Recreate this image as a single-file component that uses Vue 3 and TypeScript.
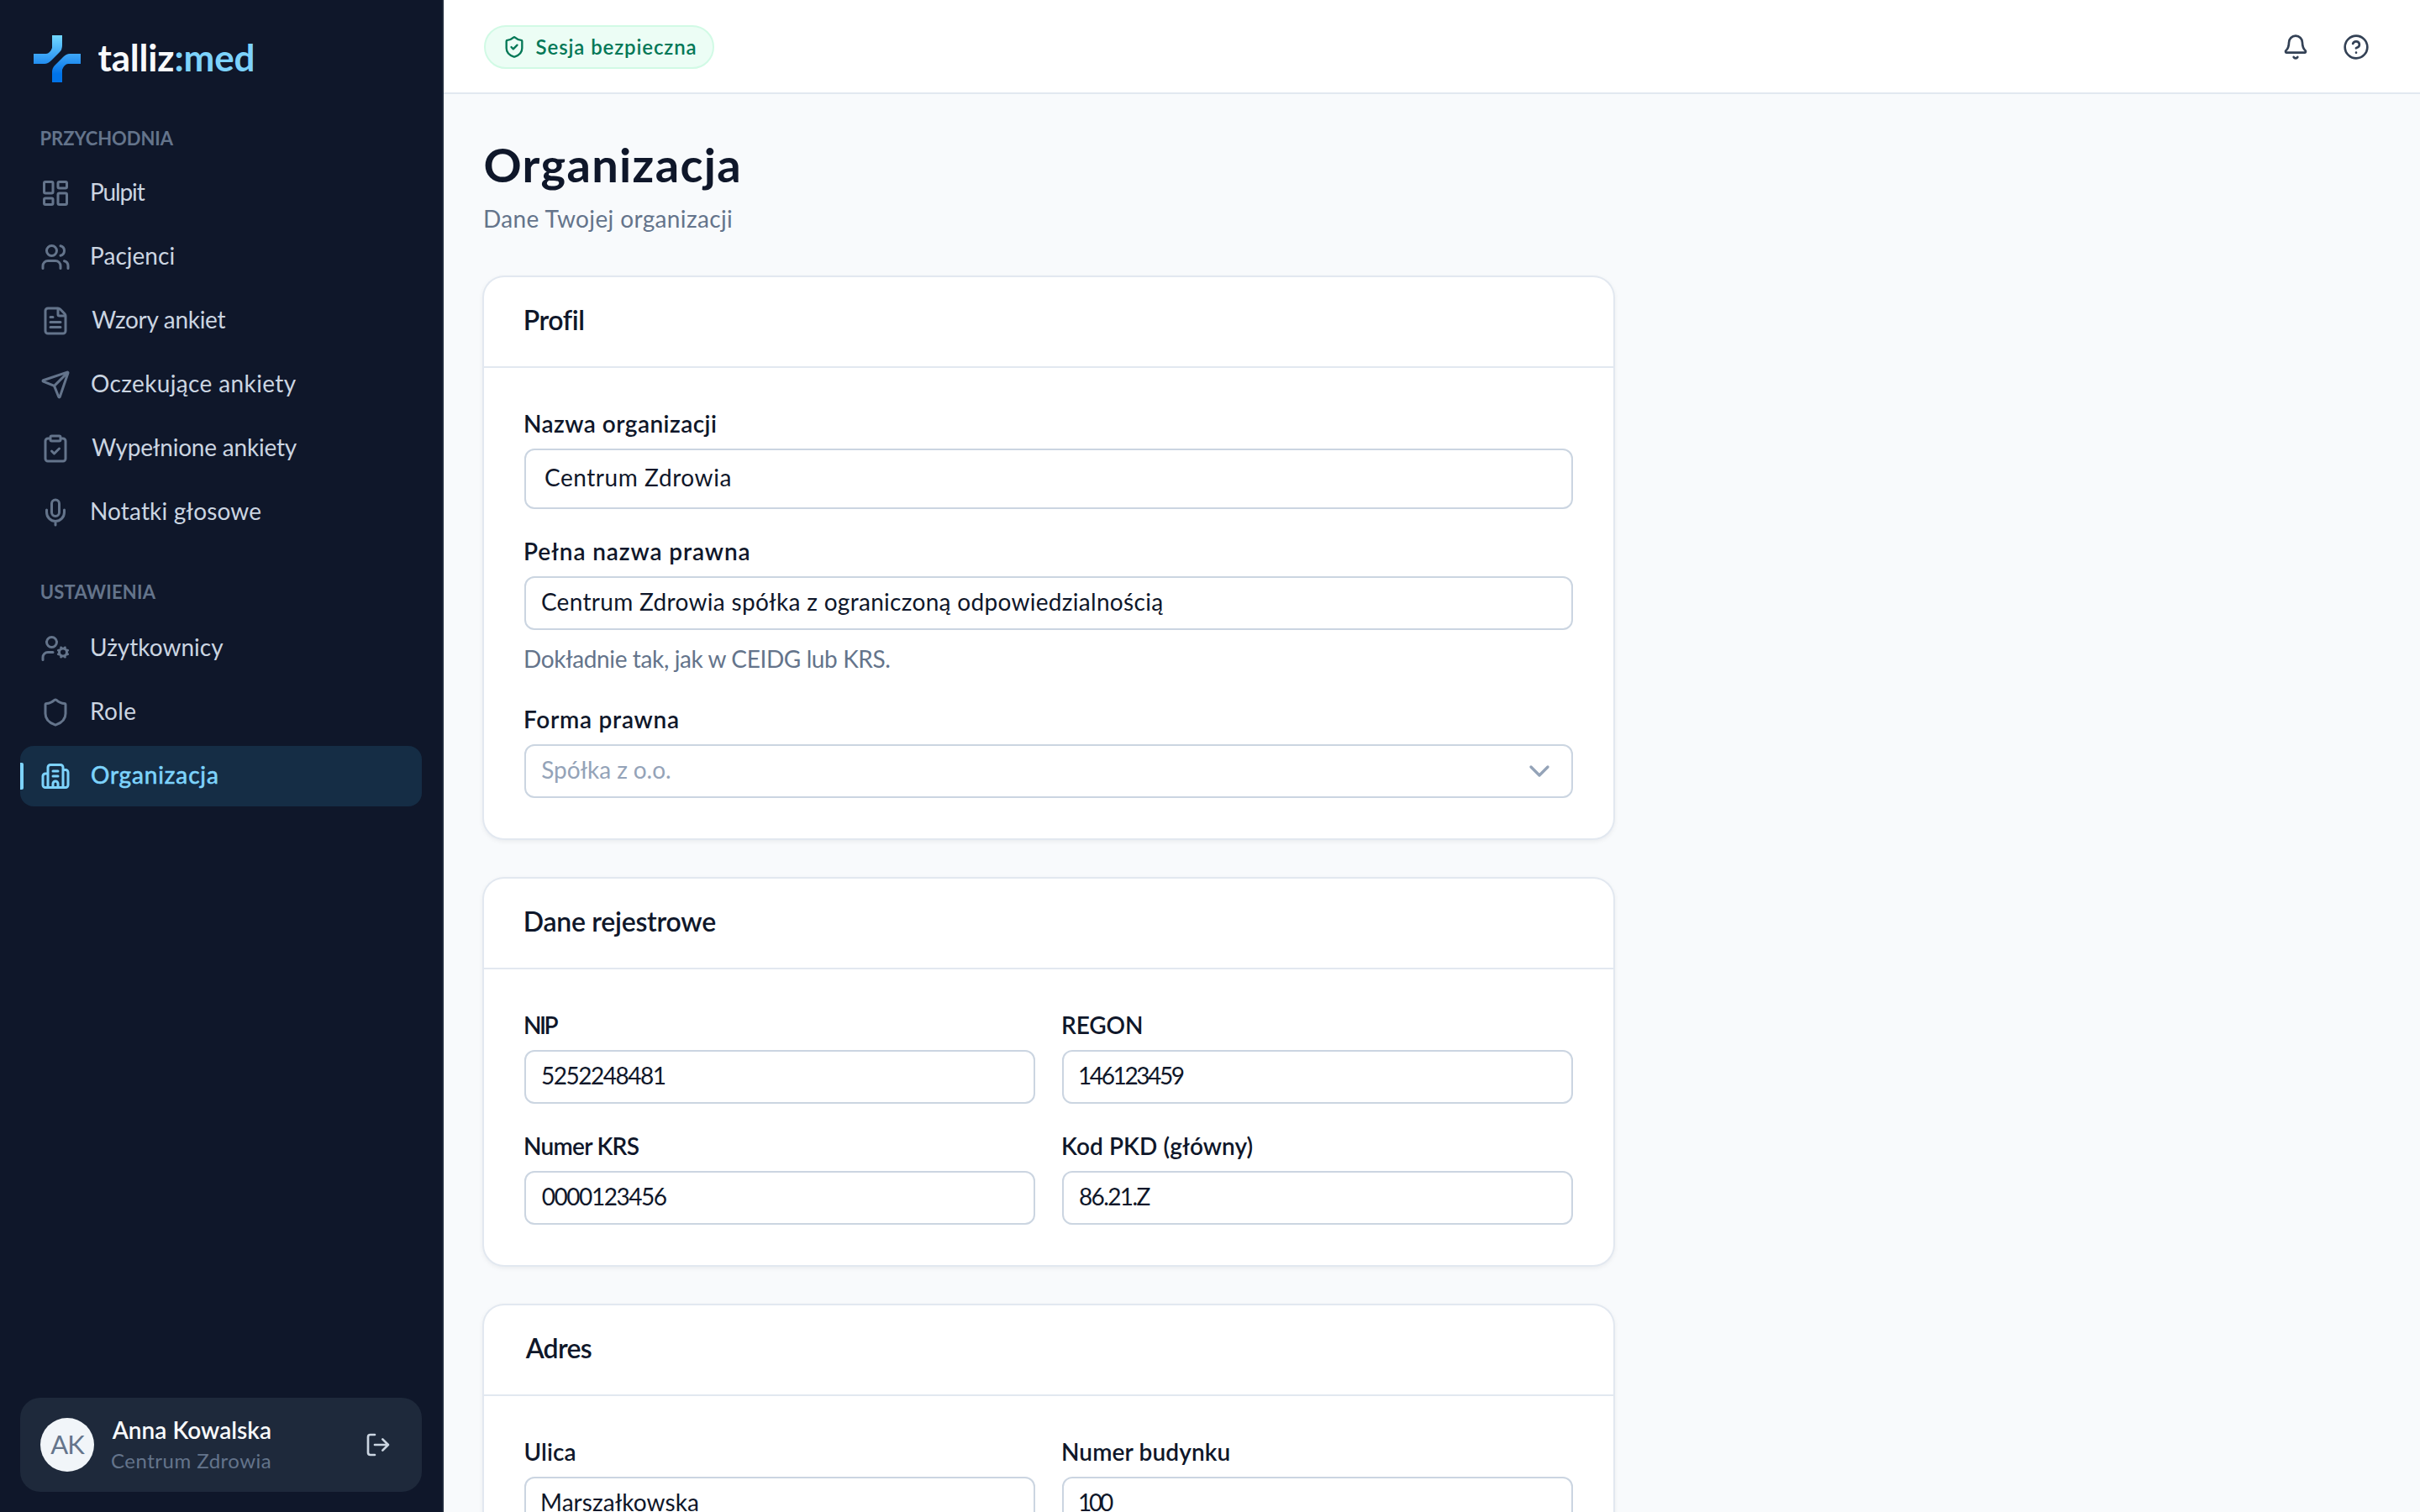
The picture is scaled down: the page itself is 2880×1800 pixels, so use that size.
<script setup lang="ts">
import type { Directive } from 'vue'

interface NavItem {
  label: string
  width: number
  icon: string
  active?: boolean
}

interface Field {
  label: string
  labelWidth: number
  value: string
  valueWidth: number
}

const shieldPath =
  'M20 13c0 5-3.5 7.5-7.66 8.95a1 1 0 0 1-.67-.01C7.5 20.5 4 18 4 13V6a1 1 0 0 1 1-1c2 0 4.5-1.2 6.24-2.72a1.17 1.17 0 0 1 1.52 0C14.51 3.81 17 5 19 5a1 1 0 0 1 1 1z'

const icons: Record<string, string> = {
  dashboard:
    'M4 3h5a1 1 0 0 1 1 1v7a1 1 0 0 1-1 1H4a1 1 0 0 1-1-1V4a1 1 0 0 1 1-1z M15 3h5a1 1 0 0 1 1 1v3a1 1 0 0 1-1 1h-5a1 1 0 0 1-1-1V4a1 1 0 0 1 1-1z M15 12h5a1 1 0 0 1 1 1v7a1 1 0 0 1-1 1h-5a1 1 0 0 1-1-1v-7a1 1 0 0 1 1-1z M4 16h5a1 1 0 0 1 1 1v3a1 1 0 0 1-1 1H4a1 1 0 0 1-1-1v-3a1 1 0 0 1 1-1z',
  users:
    'M16 21v-2a4 4 0 0 0-4-4H6a4 4 0 0 0-4 4v2 M16 3.128a4 4 0 0 1 0 7.744 M22 21v-2a4 4 0 0 0-3-3.87 M5 7a4 4 0 1 0 8 0a4 4 0 1 0-8 0',
  file:
    'M6 22a2 2 0 0 1-2-2V4a2 2 0 0 1 2-2h8a2.4 2.4 0 0 1 1.704.706l3.588 3.588A2.4 2.4 0 0 1 20 8v12a2 2 0 0 1-2 2z M14 2v5a1 1 0 0 0 1 1h5 M10 9H8 M16 13H8 M16 17H8',
  send:
    'M14.536 21.686a.5.5 0 0 0 .937-.024l6.5-19a.496.496 0 0 0-.635-.635l-19 6.5a.5.5 0 0 0-.024.937l7.93 3.18a2 2 0 0 1 1.112 1.11z M21.854 2.147l-10.94 10.939',
  clipboard:
    'M9 2h6a1 1 0 0 1 1 1v2a1 1 0 0 1-1 1H9a1 1 0 0 1-1-1V3a1 1 0 0 1 1-1z M16 4h2a2 2 0 0 1 2 2v14a2 2 0 0 1-2 2H6a2 2 0 0 1-2-2V6a2 2 0 0 1 2-2h2 M9 14l2 2 4-4',
  mic:
    'M12 19v3 M19 10v2a7 7 0 0 1-14 0v-2 M12 2a3 3 0 0 1 3 3v7a3 3 0 0 1-6 0V5a3 3 0 0 1 3-3z',
  userCog:
    'M10 15H6a4 4 0 0 0-4 4v2 M14.305 16.53l.923-.382 M15.228 13.852l-.923-.383 M16.852 12.228l-.383-.923 M16.852 17.772l-.383.924 M19.148 12.228l.383-.923 M19.53 18.696l-.382-.924 M20.772 13.852l.924-.383 M20.772 16.148l.924.383 M15 15a3 3 0 1 0 6 0a3 3 0 1 0-6 0 M5 7a4 4 0 1 0 8 0a4 4 0 1 0-8 0',
  shield: shieldPath,
  building:
    'M10 12h4 M10 8h4 M14 21v-3a2 2 0 0 0-4 0v3 M6 10H4a2 2 0 0 0-2 2v7a2 2 0 0 0 2 2h16a2 2 0 0 0 2-2V9a2 2 0 0 0-2-2h-2 M6 21V5a2 2 0 0 1 2-2h8a2 2 0 0 1 2 2v16',
}

const clinicNav: NavItem[] = [
  { label: 'Pulpit', width: 63.5, icon: 'dashboard' },
  { label: 'Pacjenci', width: 97.5, icon: 'users' },
  { label: 'Wzory ankiet', width: 160, icon: 'file' },
  { label: 'Oczekujące ankiety', width: 243, icon: 'send' },
  { label: 'Wypełnione ankiety', width: 244, icon: 'clipboard' },
  { label: 'Notatki głosowe', width: 201, icon: 'mic' },
]

const settingsNav: NavItem[] = [
  { label: 'Użytkownicy', width: 156.5, icon: 'userCog' },
  { label: 'Role', width: 52, icon: 'shield' },
  { label: 'Organizacja', width: 149, icon: 'building', active: true },
]

const registryFields: Field[] = [
  { label: 'NIP', labelWidth: 39, value: '5252248481', valueWidth: 146 },
  { label: 'REGON', labelWidth: 93, value: '146123459', valueWidth: 123.5 },
  { label: 'Numer KRS', labelWidth: 135.5, value: '0000123456', valueWidth: 148 },
  { label: 'Kod PKD (główny)', labelWidth: 225, value: '86.21.Z', valueWidth: 83.5 },
]

const addressFields: Field[] = [
  { label: 'Ulica', labelWidth: 59, value: 'Marszałkowska', valueWidth: 185 },
  { label: 'Numer budynku', labelWidth: 198, value: '100', valueWidth: 39.5 },
]

/* Tracks a line of text to a given ink width and trims its left side bearing.
   Glyphs are measured at ten times their size, as ink bounds are rounded. */
const vTrack: Directive<HTMLElement, number> = {
  mounted(el, { value }) {
    const ctx = document.createElement('canvas').getContext('2d')
    if (!ctx) return
    const cs = getComputedStyle(el)
    const text = el.textContent ?? ''
    ctx.font = `${cs.fontWeight} ${parseFloat(cs.fontSize) * 10}px ${cs.fontFamily}`
    ctx.letterSpacing = '0.01px'
    const m = ctx.measureText(text)
    const left = m.actualBoundingBoxLeft / 10
    const ink = left + m.actualBoundingBoxRight / 10
    const spacing = (value - ink) / (text.length - 1)
    el.style.letterSpacing = `${spacing.toFixed(3)}px`
    el.style.marginLeft = `${(left + 1.2).toFixed(2)}px`
  },
}
</script>

<template>
  <div class="app">
    <aside class="sidebar">
      <div class="brand">
        <svg class="brand-mark" viewBox="0 0 56 56">
          <defs>
            <linearGradient id="mark" gradientUnits="userSpaceOnUse" x1="28" y1="0" x2="28" y2="56">
              <stop offset="0" stop-color="#72d8ff" />
              <stop offset="0.5" stop-color="#319af3" />
              <stop offset="0.82" stop-color="#0073e8" />
              <stop offset="1" stop-color="#0073e8" />
            </linearGradient>
          </defs>
          <g fill="url(#mark)">
            <path d="M22 0H34V12Q34 17 31 20L21 30Q17 34 13 34H0V22H15Q17 22 19 20T22 15Z" />
            <path d="M34 56H22V44Q22 39 25 36L35 26Q39 22 43 22H56V34H41Q39 34 37 36T34 41Z" />
          </g>
        </svg>
        <span v-track="184" class="brand-name">talliz<span class="brand-accent">:med</span></span>
      </div>

      <nav class="nav">
        <div class="nav-label"><span v-track="157">PRZYCHODNIA</span></div>
        <a v-for="item in clinicNav" :key="item.label" class="nav-item">
          <svg class="icon nav-icon" viewBox="0 0 24 24"><path :d="icons[item.icon]" /></svg>
          <span v-track="item.width" class="nav-text">{{ item.label }}</span>
        </a>
        <div class="nav-label nav-label-next"><span v-track="136">USTAWIENIA</span></div>
        <a v-for="item in settingsNav" :key="item.label" class="nav-item" :class="{ active: item.active }">
          <svg class="icon nav-icon" viewBox="0 0 24 24"><path :d="icons[item.icon]" /></svg>
          <span v-track="item.width" class="nav-text">{{ item.label }}</span>
        </a>
      </nav>

      <div class="account">
        <div class="avatar">AK</div>
        <div class="account-text">
          <div class="account-name"><span v-track="188.5">Anna Kowalska</span></div>
          <div class="account-org"><span v-track="188">Centrum Zdrowia</span></div>
        </div>
        <div class="logout">
          <svg class="icon icon-32" viewBox="0 0 24 24">
            <path d="M9 21H5a2 2 0 0 1-2-2V5a2 2 0 0 1 2-2h4 M16 17l5-5-5-5 M21 12H9" />
          </svg>
        </div>
      </div>
    </aside>

    <div class="content">
      <header class="topbar">
        <div class="badge">
          <svg class="icon badge-icon" viewBox="0 0 24 24"><path :d="shieldPath" /><path d="M9 12l2 2 4-4" /></svg>
          <span v-track="189" class="badge-text">Sesja bezpieczna</span>
        </div>
        <div class="topbar-actions">
          <div class="action">
            <svg class="icon icon-32" viewBox="0 0 24 24">
              <path d="M10.268 21a2 2 0 0 0 3.464 0 M3.262 15.326A1 1 0 0 0 4 17h16a1 1 0 0 0 .74-1.673C19.41 13.956 18 12.499 18 8A6 6 0 0 0 6 8c0 4.499-1.411 5.956-2.738 7.326" />
            </svg>
          </div>
          <div class="action">
            <svg class="icon icon-32" viewBox="0 0 24 24">
              <circle cx="12" cy="12" r="10" />
              <path d="M9.09 9a3 3 0 0 1 5.83 1c0 2-3 3-3 3 M12 17h.01" />
            </svg>
          </div>
        </div>
      </header>

      <main class="page">
        <h1 class="page-title"><span v-track="301.5">Organizacja</span></h1>
        <p class="page-sub"><span v-track="294">Dane Twojej organizacji</span></p>

        <section class="card">
          <h2 class="card-title"><span v-track="69">Profil</span></h2>
          <div class="card-body">
            <div class="field">
              <label class="label"><span v-track="226.5">Nazwa organizacji</span></label>
              <div class="input input-lg"><span v-track="219.5">Centrum Zdrowia</span></div>
            </div>
            <div class="field">
              <label class="label"><span v-track="266">Pełna nazwa prawna</span></label>
              <div class="input"><span v-track="739">Centrum Zdrowia spółka z ograniczoną odpowiedzialnością</span></div>
              <p class="hint"><span v-track="434.5">Dokładnie tak, jak w CEIDG lub KRS.</span></p>
            </div>
            <div class="field">
              <label class="label"><span v-track="181.5">Forma prawna</span></label>
              <div class="input select">
                <span v-track="152">Spółka z o.o.</span>
                <svg class="icon chevron" viewBox="0 0 24 24"><path d="M6 9l6 6 6-6" /></svg>
              </div>
            </div>
          </div>
        </section>

        <section class="card">
          <h2 class="card-title"><span v-track="226">Dane rejestrowe</span></h2>
          <div class="card-body two">
            <div v-for="f in registryFields" :key="f.label" class="field">
              <label class="label"><span v-track="f.labelWidth">{{ f.label }}</span></label>
              <div class="input"><span v-track="f.valueWidth">{{ f.value }}</span></div>
            </div>
          </div>
        </section>

        <section class="card">
          <h2 class="card-title"><span v-track="78.5">Adres</span></h2>
          <div class="card-body two">
            <div v-for="f in addressFields" :key="f.label" class="field">
              <label class="label"><span v-track="f.labelWidth">{{ f.label }}</span></label>
              <div class="input"><span v-track="f.valueWidth">{{ f.value }}</span></div>
            </div>
          </div>
        </section>
      </main>
    </div>
  </div>
</template>

<style>
html,
body {
  margin: 0;
  overflow: hidden;
  background: #f8fafc;
}
</style>

<style scoped>
* {
  box-sizing: border-box;
}

.app {
  display: flex;
  width: 2880px;
  height: 1800px;
  overflow: hidden;
  font-family: Lato, 'Noto Sans', sans-serif;
  font-size: 28px;
  color: #0f172a;
  white-space: nowrap;
  font-variant-ligatures: none;
}

.icon {
  display: block;
  flex: none;
  fill: none;
  stroke: currentColor;
  stroke-width: 2;
  stroke-linecap: round;
  stroke-linejoin: round;
}

.icon-32 {
  width: 32px;
  height: 32px;
}

/* Sidebar */
.sidebar {
  display: flex;
  flex-direction: column;
  flex: none;
  width: 528px;
  padding: 42px 24px 24px;
  background: #0f172a;
  border-right: 2px solid #1e293b;
}

.brand {
  display: flex;
  align-items: center;
  height: 56px;
  padding-left: 16px;
}

.brand-mark {
  width: 56px;
  height: 56px;
  margin-right: 20px;
}

.brand-name {
  padding-bottom: 5px;
  font-size: 44px;
  line-height: 52px;
  font-weight: 700;
  color: #f8fafc;
}

.brand-accent {
  color: #7dd3fc;
}

.nav {
  display: flex;
  flex-direction: column;
  gap: 4px;
  margin-top: 52px;
}

.nav-label {
  height: 40px;
  padding-left: 24px;
  font-size: 22px;
  line-height: 29px;
  font-weight: 700;
  color: #64748b;
}

.nav-label-next {
  height: 42px;
  margin-top: 40px;
}

.nav-item {
  position: relative;
  display: flex;
  align-items: center;
  height: 72px;
  padding: 0 24px;
  border-radius: 16px;
  color: #cbd5e1;
}

.nav-icon {
  width: 36px;
  height: 36px;
  margin-right: 24px;
  color: #64748b;
}

.nav-text {
  padding-bottom: 4px;
}

.nav-item.active {
  background: #152d45;
  color: #7dd3fc;
}

.nav-item.active .nav-text {
  -webkit-text-stroke: 0.6px currentColor;
}

.nav-item.active .nav-icon {
  color: #7dd3fc;
}

.nav-item.active::before {
  content: '';
  position: absolute;
  left: 0;
  top: 20px;
  width: 4px;
  height: 32px;
  border-radius: 0 2px 2px 0;
  background: #7dd3fc;
}

.account {
  display: flex;
  align-items: center;
  height: 112px;
  margin-top: auto;
  padding: 0 24px;
  border-radius: 24px;
  background: #1e293b;
}

.avatar {
  display: flex;
  align-items: center;
  justify-content: center;
  flex: none;
  width: 64px;
  height: 64px;
  padding-bottom: 3px;
  border-radius: 50%;
  background: #f1f5f9;
  color: #64748b;
  font-size: 31px;
  letter-spacing: -1px;
}

.account-text {
  flex: 1;
  margin-left: 20px;
}

.account-name {
  line-height: 40px;
  font-weight: 600;
  color: #f8fafc;
}

.account-org {
  font-size: 24px;
  line-height: 34px;
  padding-bottom: 3px;
  color: #64748b;
}

.logout {
  display: flex;
  align-items: center;
  justify-content: center;
  width: 56px;
  height: 56px;
  color: #cbd5e1;
}

/* Top bar */
.content {
  display: flex;
  flex-direction: column;
  flex: 1;
  background: #f8fafc;
}

.topbar {
  display: flex;
  align-items: center;
  justify-content: space-between;
  flex: none;
  height: 112px;
  padding: 0 44px 0 48px;
  background: #fff;
  border-bottom: 2px solid #e2e8f0;
}

.badge {
  display: flex;
  align-items: center;
  width: 274px;
  height: 52px;
  margin-top: 2px;
  padding-left: 20px;
  border: 2px solid #d1fae5;
  border-radius: 26px;
  background: #ecfdf5;
  color: #047857;
}

.badge-icon {
  width: 28px;
  height: 28px;
  margin-right: 11px;
}

.badge-text {
  padding-bottom: 2px;
  font-size: 24px;
  font-weight: 600;
}

.topbar-actions {
  display: flex;
  gap: 8px;
  margin-top: 2px;
  color: #334155;
}

.action {
  display: flex;
  align-items: center;
  justify-content: center;
  width: 64px;
  height: 64px;
}

/* Page */
.page {
  width: 1440px;
  padding: 48px;
}

.page-title {
  margin: 0;
  font-size: 56px;
  line-height: 71px;
  font-weight: 700;
}

.page-title,
.card-title,
.label {
  color: #0f172a;
}

.page-sub {
  margin: 0;
  padding-top: 9px;
  height: 99px;
  line-height: 40px;
  color: #64748b;
}

.card {
  margin-bottom: 48px;
  border-radius: 24px;
  background: #fff;
  box-shadow:
    0 0 0 2px #e2e8f0,
    0 2px 6px 1px rgba(15, 23, 42, 0.08);
}

.card-title {
  height: 108px;
  margin: 0;
  padding: 31px 48px 0;
  border-bottom: 2px solid #e2e8f0;
  font-size: 32px;
  line-height: 40px;
  font-weight: 600;
}

.card-body {
  display: grid;
  gap: 32px;
  padding: 48px;
}

.card-body.two {
  grid-template-columns: 1fr 1fr;
}

.label {
  display: block;
  height: 48px;
  line-height: 36px;
  font-weight: 600;
}

.input {
  display: flex;
  align-items: center;
  height: 64px;
  padding: 0 18px 4px;
  border: 2px solid #cbd5e1;
  border-radius: 12px;
  background: #fff;
}

.input-lg {
  height: 72px;
  padding-left: 22px;
}

.select {
  justify-content: space-between;
  color: #94a3b8;
}

.chevron {
  width: 40px;
  height: 40px;
  margin: 4px 0 0;
}

.hint {
  height: 40px;
  margin: 16px 0 0;
  line-height: 36px;
  color: #64748b;
}
</style>
